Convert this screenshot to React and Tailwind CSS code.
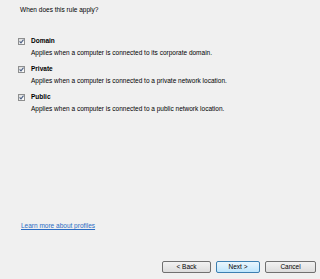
import React from 'react';

const profiles = [
  { name: 'Domain', text: 'Applies when a computer is connected to its corporate domain.' },
  { name: 'Private', text: 'Applies when a computer is connected to a private network location.' },
  { name: 'Public', text: 'Applies when a computer is connected to a public network location.' },
];

const CheckBox = () => (
  <div className="w-[7px] h-[7px] border border-[#8e8f8f] bg-gradient-to-br from-[#dcdcdc] to-white flex items-center justify-center shrink-0">
    <svg width="5" height="5" viewBox="0 0 5 5">
      <path d="M0.6 2.4 L2 3.9 L4.5 0.7" fill="none" stroke="#4d6185" strokeWidth="1.1" />
    </svg>
  </div>
);

const Button = ({ children, width, primary }) => (
  <div
    className={`${width} h-[12px] rounded-[2px] border flex items-center justify-center text-[6.5px] leading-none ${
      primary
        ? 'border-[#3c7fb1] bg-gradient-to-b from-[#eaf6fd] to-[#bee6fd]'
        : 'border-[#707070] bg-gradient-to-b from-[#f2f2f2] to-[#dddddd]'
    }`}
  >
    {children}
  </div>
);

const App = () => {
  return (
    <div
      className="w-[320px] h-[279px] bg-[#f0f0f0] flex flex-col text-black text-[6.5px] leading-[12px]"
      style={{ fontFamily: '"Liberation Sans", Arial, sans-serif' }}
    >
      <p className="pt-[4px] pl-[20px]">When does this rule apply?</p>

      <div className="mt-[19px] flex flex-col gap-[4px]">
        {profiles.map((p) => (
          <div key={p.name} className="flex flex-col">
            <div className="flex items-center pl-[18px] gap-[6px]">
              <CheckBox />
              <span className="font-bold">{p.name}</span>
            </div>
            <p className="pl-[31px]">{p.text}</p>
          </div>
        ))}
      </div>

      <div className="mt-auto pl-[21px]">
        <a href="#" className="text-[#2b6cc4] underline">Learn more about profiles</a>
      </div>

      <div className="mt-[29px] mb-[6px] pr-[4px] flex justify-end gap-[5px]">
        <Button width="w-[49px]">&lt; Back</Button>
        <Button width="w-[44px]" primary>Next &gt;</Button>
        <Button width="w-[51px]">Cancel</Button>
      </div>
    </div>
  );
};

export default App;
